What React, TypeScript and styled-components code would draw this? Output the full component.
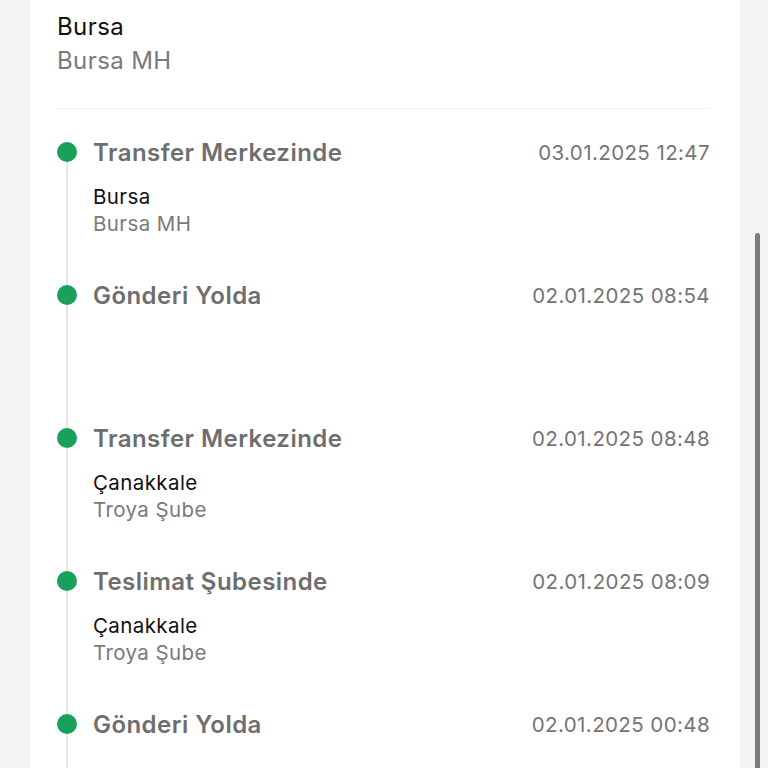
import React from 'react'
import styled, { createGlobalStyle } from 'styled-components'

const GlobalStyle = createGlobalStyle`
  body {
    margin: 0;
    background: #f3f3f5;
    font-family: Inter, 'Noto Sans', sans-serif;
    -webkit-font-smoothing: antialiased;
  }
`

const Page = styled.div`
  position: relative;
  height: 768px;
  overflow: hidden;
  display: flex;
  padding: 0 28px 0 30px;
  box-sizing: border-box;
`

const Card = styled.div`
  flex: 1;
  background: #ffffff;
  padding: 10px 30px 0 27px;
`

const Header = styled.div`
  padding-bottom: 30px;
  border-bottom: 1px solid #efeff1;
`

const City = styled.div<{ $small?: boolean }>`
  font-size: ${p => (p.$small ? '20.5px' : '24px')};
  line-height: ${p => (p.$small ? '27px' : '34px')};
  letter-spacing: 0.4px;
  color: #111111;
`

const Branch = styled(City)`
  color: #7a7a7a;
`

const Timeline = styled.div`
  padding-top: 28px;
`

const Item = styled.div<{ $first?: boolean }>`
  position: relative;
  min-height: 143px;
  padding-left: 36px;

  &::before {
    content: '';
    position: absolute;
    left: 9px;
    top: ${p => (p.$first ? '15px' : '0')};
    bottom: 0;
    width: 2px;
    background: #e6e6e8;
  }
`

const Dot = styled.span`
  position: absolute;
  left: 0;
  top: 5px;
  width: 20px;
  height: 20px;
  border-radius: 50%;
  background: #19a05a;
`

const TitleRow = styled.div`
  display: flex;
  justify-content: space-between;
  align-items: center;
  height: 30px;
`

const Title = styled.div`
  font-size: 24px;
  font-weight: 600;
  letter-spacing: 0.45px;
  color: #6e6e70;
`

const Date = styled.div`
  font-size: 20.5px;
  letter-spacing: 0.4px;
  color: #747476;
`

const Location = styled.div`
  margin-top: 16px;
`

const Scrollbar = styled.div`
  position: absolute;
  right: 8px;
  top: 233px;
  width: 5px;
  height: 600px;
  border-radius: 3px;
  background: #7d7d7f;
`

const events = [
  { title: 'Transfer Merkezinde', date: '03.01.2025 12:47', city: 'Bursa', branch: 'Bursa MH' },
  { title: 'Gönderi Yolda', date: '02.01.2025 08:54' },
  { title: 'Transfer Merkezinde', date: '02.01.2025 08:48', city: 'Çanakkale', branch: 'Troya Şube' },
  { title: 'Teslimat Şubesinde', date: '02.01.2025 08:09', city: 'Çanakkale', branch: 'Troya Şube' },
  { title: 'Gönderi Yolda', date: '02.01.2025 00:48' },
]

export default function App() {
  return (
    <Page>
      <GlobalStyle />
      <Card>
        <Header>
          <City>Bursa</City>
          <Branch>Bursa MH</Branch>
        </Header>
        <Timeline>
          {events.map((e, i) => (
            <Item key={i} $first={i === 0}>
              <Dot />
              <TitleRow>
                <Title>{e.title}</Title>
                <Date>{e.date}</Date>
              </TitleRow>
              {e.city && (
                <Location>
                  <City $small>{e.city}</City>
                  <Branch $small>{e.branch}</Branch>
                </Location>
              )}
            </Item>
          ))}
        </Timeline>
      </Card>
      <Scrollbar />
    </Page>
  )
}
